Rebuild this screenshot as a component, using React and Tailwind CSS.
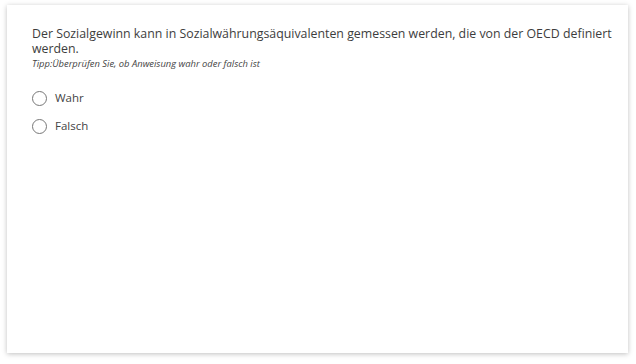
export default function App() {
  return (
    <div className="w-[636px] h-[364px] bg-white pt-[5px] pl-[7px]" style={{ fontFamily: '"Open Sans", sans-serif' }}>
      <div className="w-[621px] h-[348px] bg-white shadow-[0_1px_5px_rgba(0,0,0,0.25)] pl-[25px] pr-[10px] pt-[21px]">
        <p className="text-[12.35px] leading-[15px] text-[#3d3d3d]">
          Der Sozialgewinn kann in Sozialwährungsäquivalenten gemessen werden, die von der OECD definiert werden.
        </p>
        <p className="text-[9.4px] leading-[12px] italic text-[#444] mt-[2px]">
          Tipp:Überprüfen Sie, ob Anweisung wahr oder falsch ist
        </p>
        <div className="mt-[20px] flex flex-col gap-[12px]">
          {["Wahr", "Falsch"].map((l) => (
            <div key={l} className="flex items-center gap-[8px] h-[16px]">
              <span className="w-[15px] h-[15px] rounded-full border border-[#777] bg-white" />
              <span className="text-[11.5px] text-[#444]">{l}</span>
            </div>
          ))}
        </div>
      </div>
    </div>
  );
}
